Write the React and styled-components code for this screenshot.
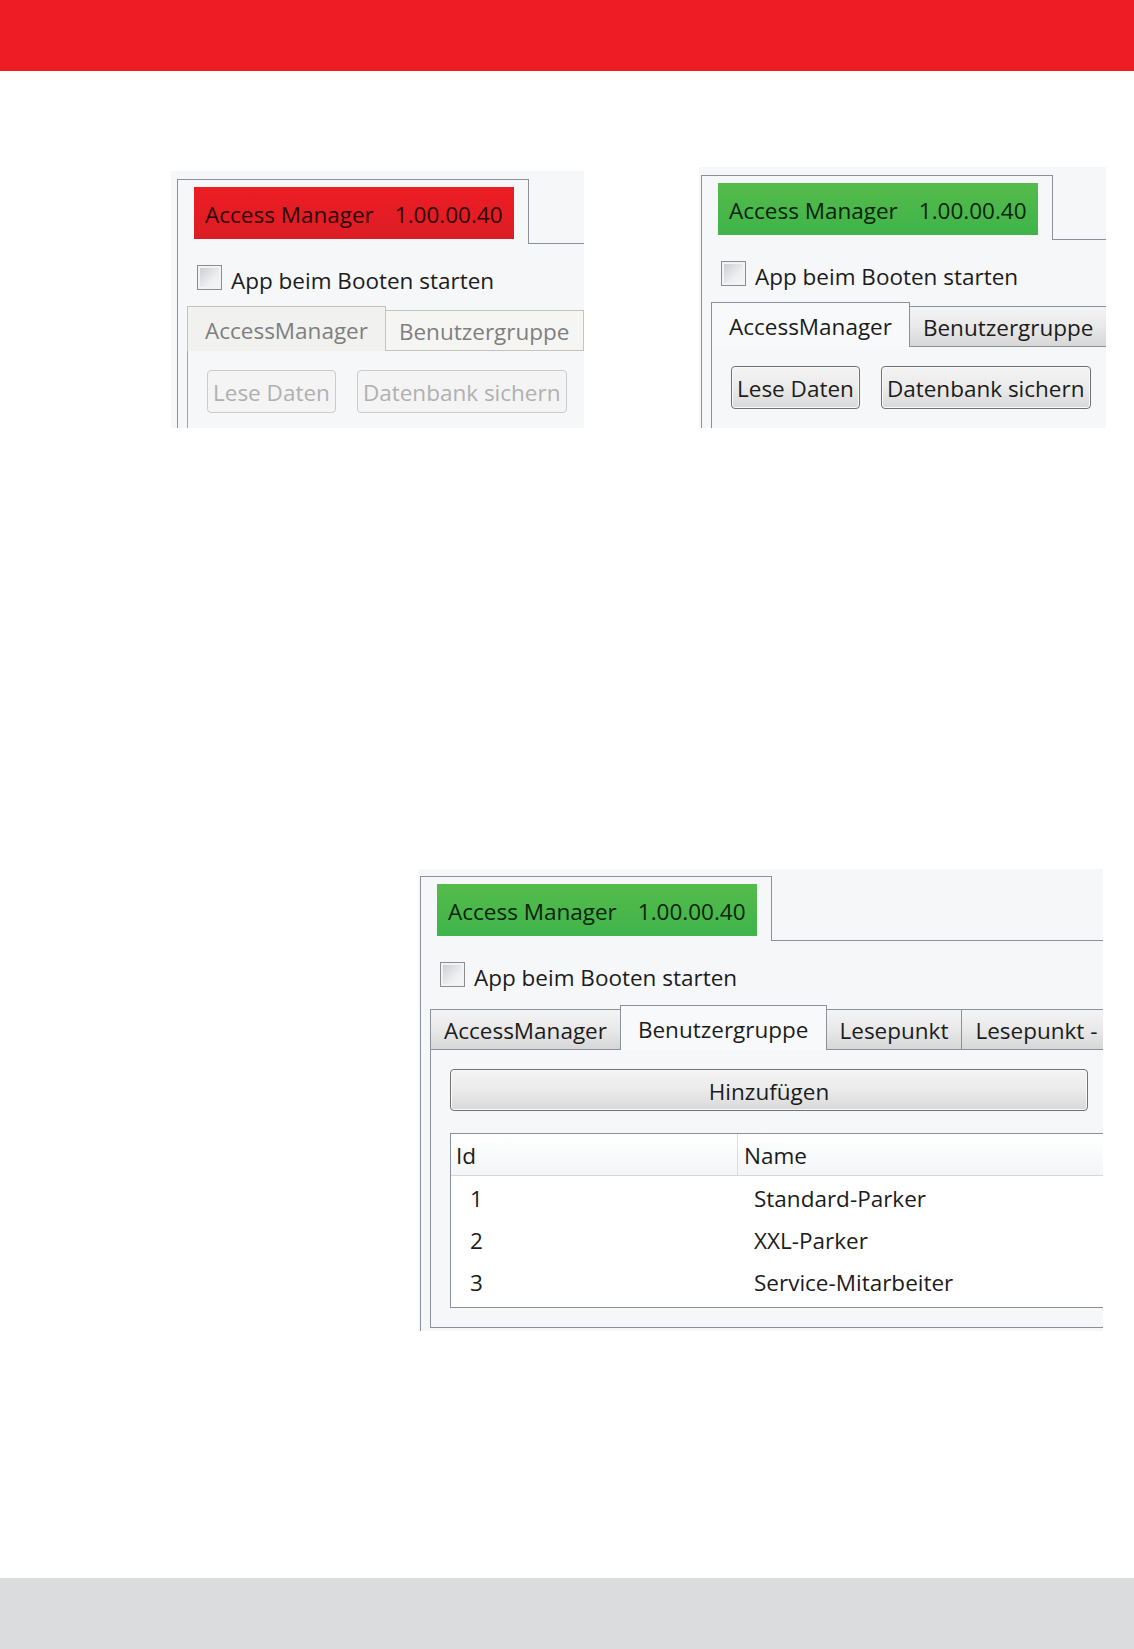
import { createGlobalStyle, styled, css } from "styled-components";

const GlobalStyle = createGlobalStyle`
  * { box-sizing: border-box; }
  body {
    margin: 0;
    background: #fff;
    font-family: "Open Sans", "Noto Sans", sans-serif;
  }
`;

const LINE = "#8c9098";

const Page = styled.div`
  height: 1649px;
  display: flex;
  flex-direction: column;
  background: #fff;
`;

const TopBar = styled.header`
  height: 71px;
  flex-shrink: 0;
  background: #ee1c25;
`;

const BottomBar = styled.footer`
  height: 71px;
  flex-shrink: 0;
  background: #dbdcde;
`;

const Main = styled.main`
  flex: 1;
  display: flex;
  flex-direction: column;
`;

const ShotRow = styled.div`
  display: flex;
  align-items: flex-start;
  padding-top: ${(p) => p.$top || 0}px;
`;

const Shot = styled.div`
  flex-shrink: 0;
  width: ${(p) => p.$w}px;
  height: ${(p) => p.$h}px;
  margin-left: ${(p) => p.$x}px;
  margin-top: ${(p) => p.$y || 0}px;
  padding: ${(p) => p.$pt}px 0 0 ${(p) => p.$pl}px;
  background: #f6f7f9;
  overflow: hidden;
`;

const Window = styled.div`
  width: ${(p) => p.$w}px;
  height: calc(100% + 30px);
  display: flex;
  flex-direction: column;
  color: #1c1c1c;
  font-size: 22.5px;
`;

const HeaderRow = styled.div`
  display: flex;
  flex-shrink: 0;
`;

const HeaderTab = styled.div`
  width: 352px;
  height: 65px;
  border: 1px solid ${LINE};
  border-bottom: none;
  padding: 7px 0 0 16px;
`;

const HeaderFill = styled.div`
  flex: 1;
  border-bottom: 1px solid ${LINE};
`;

const tones = {
  red: css`
    background: linear-gradient(#ed1c24, #dc1d25);
    color: #2b0606;
  `,
  green: css`
    background: linear-gradient(#55bb4b, #3fb44a);
    color: #0c230c;
  `,
};

const StatusBadge = styled.div`
  width: 320px;
  height: 52px;
  display: flex;
  align-items: center;
  gap: 21px;
  padding: 2px 0 0 11px;
  white-space: nowrap;
  ${(p) => tones[p.$tone]}
`;

const Body = styled.div`
  flex: 1;
  border-left: 1px solid ${LINE};
  padding: 21px 0 0 9px;
`;

const CheckRow = styled.label`
  height: 25px;
  display: flex;
  align-items: center;
  gap: 9px;
  padding-left: 10px;
  white-space: nowrap;
`;

const CheckText = styled.span`
  padding-top: 6px;
`;

const CheckBox = styled.span`
  width: 25px;
  height: 25px;
  flex-shrink: 0;
  border: 1px solid #8a8c90;
  background: linear-gradient(135deg, #c6c9cf, #eceef0 60%, #f8f8f8);
  box-shadow: inset 0 0 0 2px #f3f3f3;
`;

const TabControl = styled.div`
  margin-top: ${(p) => p.$gap || 16}px;
  width: ${(p) => p.$w}px;
  display: flex;
  flex-direction: column;
  color: ${(p) => (p.$disabled ? "#7f7f7f" : "#1c1c1c")};
`;

const TabStrip = styled.div`
  height: 45px;
  display: flex;
  align-items: flex-end;
`;

const Tab = styled.div`
  height: ${(p) => (p.$active ? 45 : 41)}px;
  display: flex;
  align-items: center;
  padding: 2px ${(p) => (p.$active ? 17 : 13)}px 0;
  white-space: nowrap;
  flex-shrink: 0;
  border: 1px solid ${(p) => (p.$disabled ? "#c6c3ba" : LINE)};
  & + & {
    margin-left: -1px;
  }
  ${(p) =>
    p.$active
      ? css`
          border-bottom: none;
          background: ${p.$disabled ? "#f1f1ef" : "#f8f9fa"};
        `
      : css`
          background: ${p.$disabled
            ? "#f5f5f3"
            : "linear-gradient(#f4f4f4, #e9e9e9 50%, #d7d7d7)"};
        `}
`;

const StripFill = styled.div`
  flex: 1;
  height: 1px;
  background: ${(p) => (p.$disabled ? "#c6c3ba" : LINE)};
`;

const TabBody = styled.div`
  border-left: 1px solid ${(p) => (p.$disabled ? "#a3a3a3" : LINE)};
  border-bottom: 1px solid ${(p) => (p.$disabled ? "#a3a3a3" : LINE)};
  padding: 19px 0 19px 19px;
`;

const ButtonRow = styled.div`
  display: flex;
  gap: 21px;
`;

const Button = styled.button`
  height: ${(p) => (p.$wide ? 42 : 43)}px;
  width: ${(p) => (p.$wide ? "638px" : "auto")};
  padding: 2px 5px 0;
  font: inherit;
  white-space: nowrap;
  border-radius: 4px;
  ${(p) =>
    p.disabled
      ? css`
          color: #b0b0b0;
          background: #f4f4f4;
          border: 1px solid #cbcbcb;
        `
      : css`
          color: #1c1c1c;
          background: linear-gradient(#f3f3f3, #ebebeb 50%, #d9d9d9);
          border: 1px solid #707070;
          box-shadow: inset 0 0 0 1px #fbfbfb;
        `}
`;

const Grid = styled.div`
  margin-top: 22px;
  width: 700px;
  border: 1px solid ${LINE};
  padding-bottom: 5px;
  background: #fff;
`;

const GridRow = styled.div`
  height: 42px;
  display: grid;
  grid-template-columns: 286px 1fr;
  align-items: center;
  padding-top: 2px;
  ${(p) =>
    p.$head &&
    css`
      background: linear-gradient(#ffffff, #f3f5f7);
      border-bottom: 1px solid #d8d8d8;
      align-items: stretch;
      padding-top: 0;
    `}
`;

const HeadCell = styled.div`
  display: flex;
  align-items: center;
  padding: 2px 0 0 5px;
  & + & {
    border-left: 1px solid #dedede;
    padding-left: 6px;
  }
`;

const Cell = styled.div`
  padding-left: 19px;
  & + & {
    padding-left: 17px;
  }
`;

const Status = ({ tone }) => (
  <HeaderRow>
    <HeaderTab>
      <StatusBadge $tone={tone}>
        <span>Access Manager</span>
        <span>1.00.00.40</span>
      </StatusBadge>
    </HeaderTab>
    <HeaderFill />
  </HeaderRow>
);

const Boot = () => (
  <CheckRow>
    <CheckBox />
    <CheckText>App beim Booten starten</CheckText>
  </CheckRow>
);

const SettingsWindow = ({ tone, disabled }) => (
  <Window $w={520}>
    <Status tone={tone} />
    <Body>
      <Boot />
      <TabControl $w={480} $disabled={disabled}>
        <TabStrip>
          <Tab $active $disabled={disabled}>AccessManager</Tab>
          <Tab $disabled={disabled}>Benutzergruppe</Tab>
          <StripFill $disabled={disabled} />
        </TabStrip>
        <TabBody $disabled={disabled}>
          <ButtonRow>
            <Button disabled={disabled}>Lese Daten</Button>
            <Button disabled={disabled}>Datenbank sichern</Button>
          </ButtonRow>
        </TabBody>
      </TabControl>
    </Body>
  </Window>
);

const groups = [
  { id: 1, name: "Standard-Parker" },
  { id: 2, name: "XXL-Parker" },
  { id: 3, name: "Service-Mitarbeiter" },
];

const GroupsWindow = () => (
  <Window $w={760}>
    <Status tone="green" />
    <Body>
      <Boot />
      <TabControl $w={740} $gap={18}>
        <TabStrip>
          <Tab>AccessManager</Tab>
          <Tab $active>Benutzergruppe</Tab>
          <Tab>Lesepunkt</Tab>
          <Tab>Lesepunkt -</Tab>
          <StripFill />
        </TabStrip>
        <TabBody>
          <Button $wide>Hinzufügen</Button>
          <Grid>
            <GridRow $head>
              <HeadCell>Id</HeadCell>
              <HeadCell>Name</HeadCell>
            </GridRow>
            {groups.map((g) => (
              <GridRow key={g.id}>
                <Cell>{g.id}</Cell>
                <Cell>{g.name}</Cell>
              </GridRow>
            ))}
          </Grid>
        </TabBody>
      </TabControl>
    </Body>
  </Window>
);

export default function App() {
  return (
    <>
      <GlobalStyle />
      <Page>
        <TopBar />
        <Main>
          <ShotRow $top={96}>
            <Shot $x={171} $y={4} $w={413} $h={257} $pt={8} $pl={6}>
              <SettingsWindow tone="red" disabled />
            </Shot>
            <Shot $x={115} $w={407} $h={261} $pt={8} $pl={2}>
              <SettingsWindow tone="green" />
            </Shot>
          </ShotRow>
          <ShotRow>
            <Shot $x={418} $y={441} $w={685} $h={462} $pt={7} $pl={2}>
              <GroupsWindow />
            </Shot>
          </ShotRow>
        </Main>
        <BottomBar />
      </Page>
    </>
  );
}
